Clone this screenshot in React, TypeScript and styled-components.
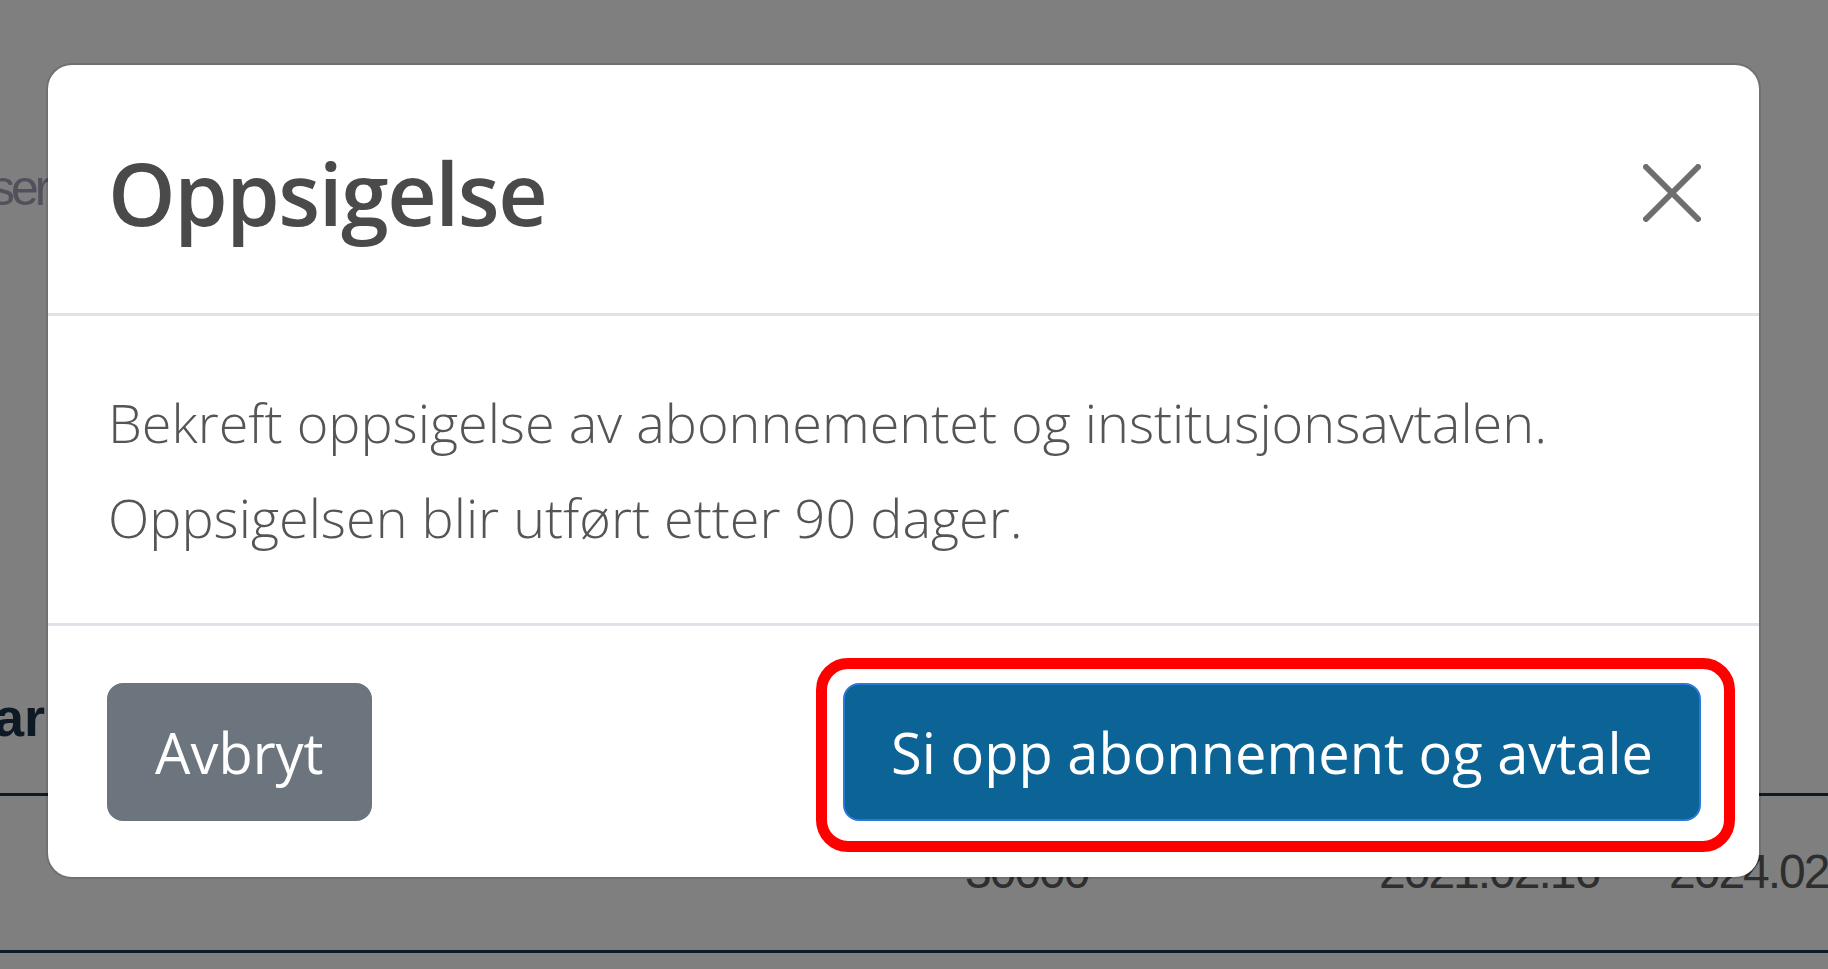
import React from 'react';
import styled, { createGlobalStyle } from 'styled-components';

const GlobalStyle = createGlobalStyle`
  html, body {
    margin: 0;
    padding: 0;
    background: #ffffff;
    overflow: hidden;
  }
  body {
    font-family: 'Open Sans', 'Noto Sans', 'Liberation Sans', sans-serif;
  }
`;

const Page = styled.div`
  width: 1828px;
  height: 969px;
  padding-top: 152px;
  box-sizing: border-box;
  overflow: hidden;
  font-family: 'Liberation Sans', Arial, sans-serif;
`;

const Lead = styled.p`
  margin: 0 0 0 -10px;
  font-size: 50px;
  line-height: 72px;
  letter-spacing: -4px;
  color: #a2a2bc;
  white-space: nowrap;
`;

const TableHead = styled.div`
  margin-top: 464px;
  padding-bottom: 47px;
  border-bottom: 3px solid #183448;
  font-size: 54px;
  line-height: 58px;
  font-weight: 700;
  color: #1a344c;
  white-space: nowrap;
`;

const HeadCell = styled.span`
  display: inline-block;
  margin-left: -6px;
`;

const TableRow = styled.div`
  display: grid;
  grid-template-columns: 965px 414px 290px 1fr;
  padding: 46px 0 48px;
  border-bottom: 3px solid #183448;
  font-size: 48px;
  line-height: 60px;
  letter-spacing: -2px;
  color: #5c5c5c;
  white-space: nowrap;
`;

const Cell = styled.span`
  overflow: hidden;
`;

const Backdrop = styled.div`
  position: fixed;
  inset: 0;
  background: rgba(0, 0, 0, 0.5);
  display: flex;
  align-items: flex-start;
  padding: 65px 69px 0 48px;
`;

const Modal = styled.div`
  flex: 1;
  display: flex;
  flex-direction: column;
  background: #ffffff;
  border-radius: 24px;
  box-shadow: 0 0 0 2px rgba(0, 0, 0, 0.12);
  font-family: 'Open Sans', 'Noto Sans', sans-serif;
`;

const Header = styled.div`
  height: 251px;
  display: flex;
  align-items: center;
  justify-content: space-between;
  padding: 8px 58px 0 60px;
  box-sizing: border-box;
  border-bottom: 3px solid #dee3e9;
`;

const Title = styled.h4`
  margin: 0;
  font-size: 86px;
  line-height: 1.2;
  font-weight: 600;
  letter-spacing: -1.5px;
  color: #4a4a4a;
`;

const CloseButton = styled.button`
  width: 58px;
  height: 58px;
  padding: 0;
  border: none;
  background: transparent;
  display: flex;
  cursor: pointer;
`;

const Body = styled.div`
  padding: 59px 60px 58px;
  border-bottom: 3px solid #dee3e9;
  font-size: 54px;
  line-height: 95px;
  font-weight: 300;
  color: #555555;
`;

const Line = styled.p`
  margin: 0;
  white-space: nowrap;
`;

const Footer = styled.div`
  display: flex;
  justify-content: space-between;
  align-items: center;
  padding: 57px 58px 56px 59px;
`;

const Button = styled.button<{ $variant: 'secondary' | 'primary' }>`
  position: relative;
  height: 138px;
  padding: 0 46px;
  border-radius: 16px;
  border: 2px solid ${({ $variant }) => ($variant === 'primary' ? '#2b78dc' : '#6c757d')};
  background: ${({ $variant }) => ($variant === 'primary' ? '#0b6396' : '#6c757d')};
  color: #ffffff;
  font-family: 'Open Sans', 'Noto Sans', sans-serif;
  font-size: 56px;
  line-height: 134px;
  font-weight: 400;
  white-space: nowrap;
  cursor: pointer;
`;

const Highlight = styled.span`
  position: absolute;
  top: -27px;
  left: -29px;
  right: -36px;
  bottom: -33px;
  border: 11px solid #ff0000;
  border-radius: 32px;
  pointer-events: none;
`;

function CloseIcon(): JSX.Element {
  return (
    <svg width="58" height="58" viewBox="0 0 58 58" fill="none">
      <path d="M3 3 L55 55 M55 3 L3 55" stroke="#6e6e6e" strokeWidth="6" strokeLinecap="round" />
    </svg>
  );
}

export default function App(): JSX.Element {
  return (
    <>
      <GlobalStyle />
      <Page>
        <Lead>ser</Lead>
        <TableHead>
          <HeadCell>ar</HeadCell>
        </TableHead>
        <TableRow>
          <Cell />
          <Cell>30000</Cell>
          <Cell>2021.02.16</Cell>
          <Cell>2024.02.16</Cell>
        </TableRow>
      </Page>

      <Backdrop>
        <Modal role="dialog" aria-modal="true">
          <Header>
            <Title>Oppsigelse</Title>
            <CloseButton type="button" aria-label="Lukk">
              <CloseIcon />
            </CloseButton>
          </Header>
          <Body>
            <Line>Bekreft oppsigelse av abonnementet og institusjonsavtalen.</Line>
            <Line>Oppsigelsen blir utført etter 90 dager.</Line>
          </Body>
          <Footer>
            <Button type="button" $variant="secondary">
              Avbryt
            </Button>
            <Button type="button" $variant="primary">
              Si opp abonnement og avtale
              <Highlight />
            </Button>
          </Footer>
        </Modal>
      </Backdrop>
    </>
  );
}
